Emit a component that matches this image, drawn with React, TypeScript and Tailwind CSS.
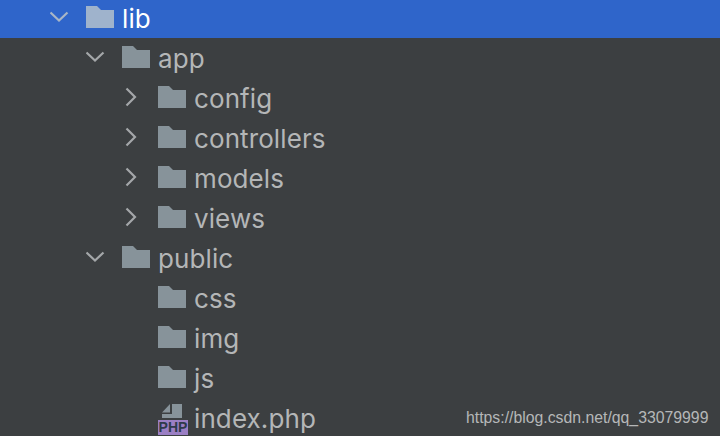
import React from 'react';

const Folder = ({light}: {light?: boolean}) => (
    <svg width="28" height="22" viewBox="0 0 28 22" className="shrink-0 -mt-[2px]">
        <path d="M0 0H11L15 4H28V22H0Z" fill={light ? '#9fb3cc' : '#87939a'}/>
    </svg>
);

const Chevron = ({open, light}: {open?: boolean; light?: boolean}) => (
    <svg width="20" height="20" viewBox="0 0 20 20" fill="none" stroke={light ? '#a9b6c6' : '#a4a7a9'} strokeWidth="2.2"
         className="-mt-[2px]">
        {open ? <path d="M0.5 5.5L9 13.5L17.5 5.5"/> : <path d="M4.5 1.5L13 10L4.5 18.5"/>}
    </svg>
);

const PhpIcon = () => (
    <div className="relative w-[30px] h-[32px] mt-[1px] -mr-[2px] shrink-0">
        <svg width="30" height="16" viewBox="0 0 30 16" className="absolute left-0 top-[1px]">
            <path d="M14 0H24V14H4V10H14Z" fill="#87939a"/>
            <path d="M4 8.5L12 0V8.5Z" fill="#87939a"/>
        </svg>
        <div className="absolute left-0 bottom-0 w-[30px] h-[15px] bg-[#9b7fc4] text-[#2f3a4a] text-[14px] leading-[15px] font-bold text-center font-['Liberation_Sans',sans-serif] overflow-hidden">PHP</div>
    </div>
);

const Row = ({pad, arrow, icon, label}: {pad: string; arrow?: 'open' | 'closed'; icon?: React.ReactNode; label: string}) => (
    <div className={`h-10 flex items-center ${pad}`}>
        <div className="w-9 shrink-0 flex items-center">
            {arrow && <Chevron open={arrow === 'open'}/>}
        </div>
        {icon ?? <Folder/>}
        <span className="ml-2 pt-[2px] text-[26px] tracking-[0.1px] leading-10 text-[#b4b6b7]">{label}</span>
    </div>
);

export default function App() {
    return (
        <div className="relative w-[720px] h-[436px] overflow-hidden bg-[#3c3f41] font-['Inter',sans-serif]">
            <div className="h-[38px] bg-[#2f65ca] flex items-center pl-[50px]">
                <div className="w-9 shrink-0 flex items-center -mt-[2px]">
                    <Chevron open light/>
                </div>
                <div className="flex items-center -mt-[2px]">
                    <Folder light/>
                </div>
                <span className="ml-2 text-[26px] tracking-[0.1px] leading-10 text-white">lib</span>
            </div>
            <Row pad="pl-[86px]" arrow="open" label="app"/>
            <Row pad="pl-[122px]" arrow="closed" label="config"/>
            <Row pad="pl-[122px]" arrow="closed" label="controllers"/>
            <Row pad="pl-[122px]" arrow="closed" label="models"/>
            <Row pad="pl-[122px]" arrow="closed" label="views"/>
            <Row pad="pl-[86px]" arrow="open" label="public"/>
            <Row pad="pl-[122px]" label="css"/>
            <Row pad="pl-[122px]" label="img"/>
            <Row pad="pl-[122px]" label="js"/>
            <Row pad="pl-[122px]" icon={<PhpIcon/>} label="index.php"/>
            <div className="absolute left-[466px] top-[407px] text-[15.8px] leading-[22px] text-[#b5b7b8] font-['Liberation_Sans',sans-serif]">https://blog.csdn.net/qq_33079999</div>
        </div>
    );
}
